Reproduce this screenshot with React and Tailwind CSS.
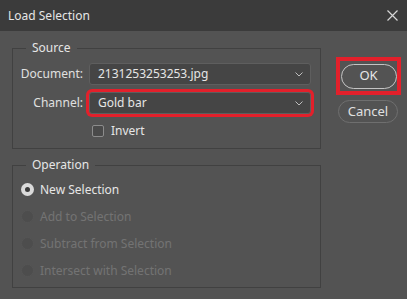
import { useState } from "react";

const font = { fontFamily: '"Noto Sans", "Liberation Sans", sans-serif' };

const Chevron = () => (
    <svg width="8" height="5" viewBox="0 0 8 5" className="text-[#bdbdbd]">
        <path d="M0.5 0.5 L4 4 L7.5 0.5" fill="none" stroke="currentColor" strokeWidth="1" />
    </svg>
);

const Dropdown = ({ value, highlight }) => (
    <div
        className={
            "w-[222px] h-[22px] flex items-center justify-between pl-[8px] pr-[7px] rounded-[3px] bg-[#454545] border border-[#5e5e5e] text-[#e6e6e6] " +
            (highlight ? "ring-[3px] ring-[#e3202b]" : "")
        }>
        <span>{value}</span>
        <Chevron />
    </div>
);

const Radio = ({ label, checked, disabled }) => (
    <div className="h-[27px] flex items-center">
        {checked ? (
            <div className="w-[13px] h-[13px] rounded-full bg-[#dadada] flex items-center justify-center">
                <div className="w-[5px] h-[5px] rounded-full bg-[#3a3a3a]" />
            </div>
        ) : (
            <div className="w-[13px] h-[13px] rounded-full bg-[#4d4d4d] border border-[#555555]" />
        )}
        <span className={"ml-[6px] " + (disabled ? "text-[#737373]" : "text-[#e6e6e6]")}>{label}</span>
    </div>
);

const GroupBox = ({ title, className, children }) => (
    <div className={"relative border border-[#414141] " + className}>
        <span className="absolute -top-[10px] left-[13px] px-[6px] bg-[#535353] text-[#e6e6e6] leading-[18px]">{title}</span>
        {children}
    </div>
);

const App = () => {
    const [invert, setInvert] = useState(false);

    return (
        <div style={font} className="w-[407px] h-[299px] bg-[#535353] text-[12px] overflow-hidden">
            {/* title bar */}
            <div className="h-[31px] bg-[#3b3b3b] flex items-center justify-between pl-[8px] pr-[9px]">
                <span className="text-[12px] text-[#e6e6e6]">Load Selection</span>
                <svg width="11" height="11" viewBox="0 0 11 11" className="text-[#d6d6d6]">
                    <path d="M0.5 0.5 L10.5 10.5 M10.5 0.5 L0.5 10.5" stroke="currentColor" strokeWidth="1.2" />
                </svg>
            </div>

            <div className="flex pl-3 pt-[17px]">
                <div className="w-[309px]">
                    <GroupBox title="Source" className="pb-[11px]">
                        <div className="flex items-center mt-[14px]">
                            <span className="w-[70px] text-right text-[#e0e0e0]">Document:</span>
                            <div className="ml-[6px]">
                                <Dropdown value="2131253253253.jpg" />
                            </div>
                        </div>
                        <div className="flex items-center mt-[7px]">
                            <span className="w-[70px] text-right text-[#e0e0e0]">Channel:</span>
                            <div className="ml-[6px]">
                                <Dropdown value="Gold bar" highlight />
                            </div>
                        </div>
                        <div className="flex items-center mt-[11px] ml-[79px] h-[12px] cursor-pointer" onClick={() => setInvert(!invert)}>
                            <div className="w-[12px] h-[12px] rounded-[2px] border border-[#8c8c8c] bg-[#4a4a4a]" />
                            <span className="ml-[7px] text-[#e6e6e6]">Invert</span>
                        </div>
                    </GroupBox>

                    <GroupBox title="Operation" className="mt-[16px] pt-[10px] pb-[3px] pl-[8px]">
                        <Radio label="New Selection" checked />
                        <Radio label="Add to Selection" disabled />
                        <Radio label="Subtract from Selection" disabled />
                        <Radio label="Intersect with Selection" disabled />
                    </GroupBox>
                </div>

                <div className="ml-[15px] pt-[9px] flex flex-col">
                    <div className="w-[65px] h-[38px] border-[4px] border-[#e3202b] flex items-center justify-center">
                        <button className="w-[56px] h-[25px] rounded-full border border-[#c4c4c4] text-[13px] text-[#e6e6e6]">OK</button>
                    </div>
                    <button className="mt-[5px] ml-[2px] w-[60px] h-[23px] rounded-full border border-[#6f6f6f] text-[13px] text-[#e0e0e0]">Cancel</button>
                </div>
            </div>
        </div>
    );
};

export default App;
